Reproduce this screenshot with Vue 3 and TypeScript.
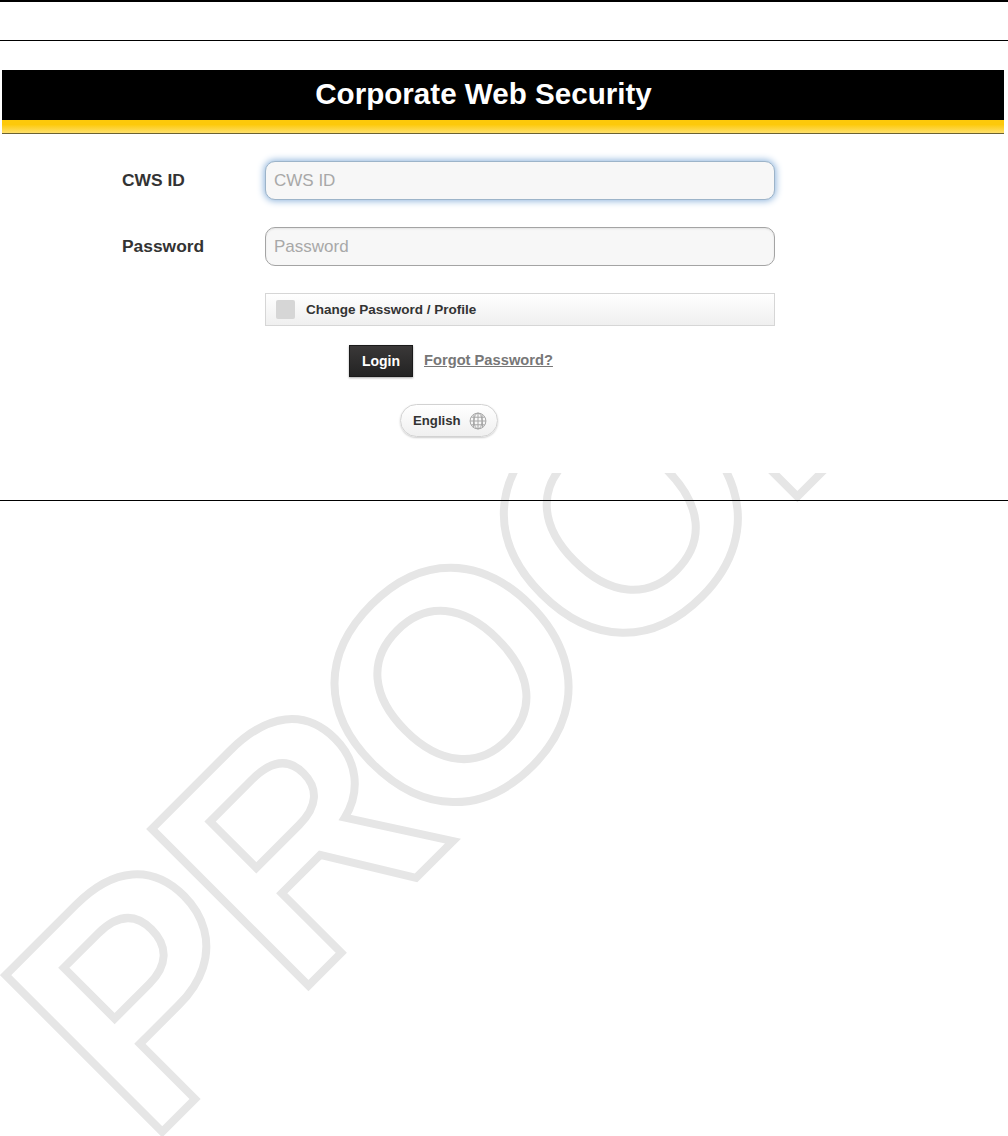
<template>
  <div class="page">
    <!-- watermark sits behind the sheet and only shows below the login panel -->
    <svg class="watermark" viewBox="0 473 1008 663" width="1008" height="663" aria-hidden="true">
      <text x="147" y="1147" dx="0 -8 -22 -11 -9" transform="rotate(-45 147 1147)">PROOF</text>
    </svg>

    <header class="top-rule"></header>

    <section class="panel">
      <div class="banner">
        <h1>Corporate Web Security</h1>
      </div>
      <div class="stripe"></div>

      <form class="login" @submit.prevent>
        <div class="field">
          <label for="cws">CWS ID</label>
          <input id="cws" v-model="cwsId" class="focused" type="text" placeholder="CWS ID" />
        </div>
        <div class="field">
          <label for="pw">Password</label>
          <input id="pw" v-model="password" type="password" placeholder="Password" />
        </div>
        <div class="field">
          <span></span>
          <label class="change">
            <span class="box"></span>
            Change Password / Profile
          </label>
        </div>
        <div class="actions">
          <button class="btn-login" type="submit">Login</button>
          <a class="forgot" href="#">Forgot Password?</a>
        </div>
        <div class="lang-row">
          <button class="lang" type="button">
            English
            <svg class="globe" viewBox="0 0 20 20" width="18" height="18">
              <circle cx="10" cy="10" r="8.8" />
              <ellipse cx="10" cy="10" rx="4.4" ry="8.8" />
              <path d="M10 1.2v17.6M1.2 10h17.6M2.6 5.8h14.8M2.6 14.2h14.8M5.6 2.6 4.8 17.4M14.4 2.6l.8 14.8" />
            </svg>
          </button>
        </div>
      </form>
    </section>

    <div class="bottom-rule"></div>
  </div>
</template>

<script setup lang="ts">
import { ref } from 'vue'

const cwsId = ref('')
const password = ref('')
</script>

<style>
body {
  background: #fff;
}
</style>

<style scoped>
.page {
  position: relative;
  width: 1008px;
  height: 1136px;
  overflow: hidden;
  background: #fff;
  font-family: "Liberation Sans", Arial, sans-serif;
}
.watermark {
  position: absolute;
  left: 0;
  top: 473px;
}
.watermark text {
  font-family: "Liberation Sans", Arial, sans-serif;
  font-weight: 700;
  font-size: 322px;
  fill: none;
  stroke: #e6e6e6;
  stroke-width: 8px;
}
.top-rule {
  height: 38px;
  border-top: 2px solid #000;
  border-bottom: 1px solid #000;
}
.panel {
  position: relative;
  box-sizing: border-box;
  height: 403px;
  margin-top: 29px;
  padding: 0 4px 0 2px;
  background: #fff;
}
.banner {
  height: 50px;
  padding-right: 39px;
  display: flex;
  align-items: center;
  justify-content: center;
  background: #000;
}
.banner h1 {
  margin: 0 0 3px;
  font-size: 29.6px;
  font-weight: 700;
  color: #fff;
}
.stripe {
  height: 13px;
  background: linear-gradient(#fdc90b 0, #fdc90b 35%, #fee06c 100%);
  border-bottom: 1px solid #6b6232;
}
.login {
  padding: 27px 0 0 120px;
}
.field {
  display: grid;
  grid-template-columns: 143px 510px;
  align-items: center;
  margin-bottom: 27px;
}
.field > label {
  font-size: 17.4px;
  font-weight: 700;
  color: #333;
}
input {
  box-sizing: border-box;
  width: 510px;
  height: 39px;
  padding: 0 8px;
  border: 1px solid #a4a4a4;
  border-radius: 10px;
  background: #f7f7f7;
  box-shadow: inset 0 1px 2px rgba(0, 0, 0, 0.08);
  font: 17px "Liberation Sans", Arial, sans-serif;
  outline: none;
}
input::placeholder {
  color: #a8a8a8;
  opacity: 1;
}
input.focused {
  border-color: #9db4c9;
  box-shadow: 0 0 7px 1px #8eb4dc;
}
.field > .change {
  box-sizing: border-box;
  width: 510px;
  height: 33px;
  display: flex;
  align-items: center;
  gap: 11px;
  padding-left: 10px;
  border: 1px solid #d6d6d6;
  background: linear-gradient(#fff, #efefef);
  font-size: 13.5px;
}
.box {
  width: 19px;
  height: 19px;
  border-radius: 2px;
  background: #d6d6d6;
}
.actions {
  display: flex;
  align-items: center;
  gap: 11px;
  margin: -8px 0 0 227px;
}
.btn-login {
  width: 64px;
  height: 32px;
  border: 1px solid #1a1a1a;
  background: linear-gradient(#3a3838, #232323);
  box-shadow: 0 1px 2px rgba(0, 0, 0, 0.35);
  color: #fff;
  font: 700 14px "Liberation Sans", Arial, sans-serif;
}
.forgot {
  margin-bottom: 3px;
  font-size: 14.7px;
  font-weight: 700;
  color: #777;
}
.lang-row {
  margin: 27px 0 0 278px;
}
.lang {
  box-sizing: border-box;
  width: 98px;
  height: 33px;
  display: flex;
  align-items: center;
  gap: 8px;
  padding: 0 0 0 12px;
  border: 1px solid #d2d2d2;
  border-radius: 17px;
  background: linear-gradient(#fff, #f0f0f0);
  box-shadow: 0 1px 2px rgba(0, 0, 0, 0.2);
  color: #333;
  font: 700 13.2px "Liberation Sans", Arial, sans-serif;
}
.globe {
  fill: none;
  stroke: #a6a6a6;
  stroke-width: 1.1;
}
.bottom-rule {
  position: relative;
  margin-top: 27px;
  height: 1px;
  background: #000;
}
</style>
